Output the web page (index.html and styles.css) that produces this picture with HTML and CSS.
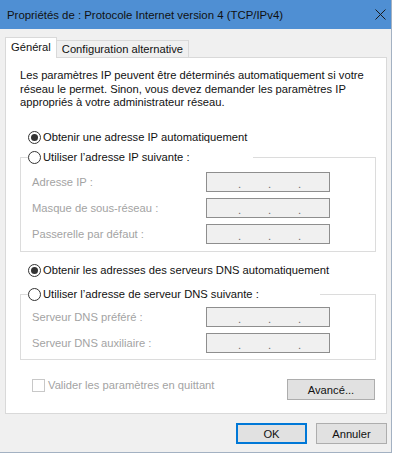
FILE: index.html
```html
<!DOCTYPE html>
<html lang="fr">
<head>
<meta charset="utf-8">
<title>Propriétés de : Protocole Internet version 4 (TCP/IPv4)</title>
<link rel="stylesheet" href="styles.css">
</head>
<body>
<div class="window">
  <div class="titlebar">
    <span class="title">Propriétés de : Protocole Internet version 4 (TCP/IPv4)</span>
    <svg class="close" width="11" height="11" viewBox="0 0 11 11"><path d="M0.5 0.5L10.5 10.5M10.5 0.5L0.5 10.5" stroke="#1a1a1a" stroke-width="1" fill="none"/></svg>
  </div>
  <div class="tabs">
    <div class="tab active">Général</div>
    <div class="tab">Configuration alternative</div>
  </div>
  <div class="panel">
    <p class="intro">Les paramètres IP peuvent être déterminés automatiquement si votre<br>réseau le permet. Sinon, vous devez demander les paramètres IP<br>appropriés à votre administrateur réseau.</p>

    <div class="radio-row first"><span class="radio checked"></span>Obtenir une adresse IP automatiquement</div>
    <fieldset class="group">
      <legend class="legend legend-ip"><span class="radio"></span>Utiliser l’adresse IP suivante :</legend>
      <div class="field first"><span class="flabel">Adresse IP :</span><span class="ipbox"><i>.</i><i>.</i><i>.</i></span></div>
      <div class="field"><span class="flabel">Masque de sous-réseau :</span><span class="ipbox"><i>.</i><i>.</i><i>.</i></span></div>
      <div class="field"><span class="flabel">Passerelle par défaut :</span><span class="ipbox"><i>.</i><i>.</i><i>.</i></span></div>
    </fieldset>

    <div class="radio-row dns"><span class="radio checked"></span>Obtenir les adresses des serveurs DNS automatiquement</div>
    <fieldset class="group group-dns">
      <legend class="legend legend-dns"><span class="radio"></span>Utiliser l’adresse de serveur DNS suivante :</legend>
      <div class="field first"><span class="flabel">Serveur DNS préféré :</span><span class="ipbox"><i>.</i><i>.</i><i>.</i></span></div>
      <div class="field"><span class="flabel">Serveur DNS auxiliaire :</span><span class="ipbox"><i>.</i><i>.</i><i>.</i></span></div>
    </fieldset>

    <div class="bottom-row">
      <span class="checkbox"></span>
      <span class="check-label">Valider les paramètres en quittant</span>
      <button class="btn advanced">Avancé...</button>
    </div>
  </div>
  <div class="footer">
    <button class="btn ok">OK</button>
    <button class="btn">Annuler</button>
  </div>
</div>
</body>
</html>
```

FILE: styles.css
```css
* { box-sizing: border-box; }
html, body { margin: 0; padding: 0; background: #ffffff; }
body {
  font-family: "Liberation Sans", Arial, sans-serif;
  font-size: 11.2px;
  color: #1b1b1b;
}

.window {
  width: 392px;
  height: 453px;
  background: #f0f0f0;
  border-right: 1px solid #a3b1c2;
  border-bottom: 1px solid #a3b1c2;
  display: flex;
  flex-direction: column;
}

.titlebar {
  height: 29px;
  flex: none;
  background: #4f8fd3;
  display: flex;
  align-items: center;
  padding-left: 7px;
  padding-right: 5px;
}
.title { flex: 1; color: #111; white-space: nowrap; font-size: 11.4px; }
.close { flex: none; }

.tabs {
  display: flex;
  align-items: flex-end;
  height: 20px;
  margin-top: 8px;
  padding-left: 5px;
  flex: none;
}
.tab {
  height: 17px;
  padding: 0 5px;
  border: 1px solid #d9d9d9;
  border-bottom: none;
  background: #f0f0f0;
  display: flex;
  align-items: center;
  white-space: nowrap;
  color: #111;
}
.tab.active {
  height: 21px;
  margin-bottom: -1px;
  background: #ffffff;
  position: relative;
  z-index: 1;
  padding-bottom: 2px;
}
.tab + .tab { margin-left: -1px; }

.panel {
  margin-left: 5px;
  width: 382px;
  height: 357px;
  flex: none;
  background: #ffffff;
  border: 1px solid #d9d9d9;
  padding: 11px 10px 0 14px;
}

.intro { margin: 0; line-height: 13.5px; color: #111; white-space: nowrap; }

.radio-row {
  display: flex;
  align-items: center;
  height: 14px;
  margin-left: 8px;
  white-space: nowrap;
  color: #111;
}
.radio-row.first { margin-top: 20.5px; }
.radio-row.dns { margin-top: 11px; }

.radio {
  flex: none;
  width: 13px;
  height: 13px;
  border: 1px solid #333333;
  border-radius: 50%;
  background: #ffffff;
  margin-right: 2px;
  display: inline-flex;
  align-items: center;
  justify-content: center;
}
.radio.checked::after {
  content: "";
  width: 7px;
  height: 7px;
  border-radius: 50%;
  background: #333333;
}

.group {
  border: 1px solid #dcdcdc;
  margin: 6px 0 0 0;
  padding: 0 0 7px 0;
  min-width: 0;
}
.group-dns { margin-top: 10px; padding-bottom: 6px; }

.legend {
  display: flex;
  align-items: center;
  height: 14px;
  padding: 0;
  margin-left: 7px;
  white-space: nowrap;
  color: #111;
}
.legend-ip { width: 225px; }
.legend-dns { width: 292px; }

.field {
  display: flex;
  align-items: center;
  height: 20px;
  margin-top: 6px;
  padding-left: 11px;
}
.field.first { margin-top: 8px; }
.group-dns .field.first { margin-top: 6px; }

.flabel { width: 174px; color: #a3a3a3; white-space: nowrap; }

.ipbox {
  width: 124px;
  height: 20px;
  border: 1px solid #8e8e8e;
  background: #f0f0f0;
  display: flex;
  align-items: center;
  padding-left: 31px;
  padding-top: 3px;
  color: #6e6e6e;
}
.ipbox i { font-style: normal; width: 30px; }

.bottom-row {
  display: flex;
  align-items: flex-start;
  height: 21px;
  margin-top: 19px;
  padding-left: 12px;
}
.checkbox {
  width: 13px;
  height: 13px;
  border: 1px solid #c8c8c8;
  background: #ffffff;
  flex: none;
}
.check-label { margin-left: 3px; color: #a3a3a3; white-space: nowrap; line-height: 13px; }

.btn {
  font-family: inherit;
  font-size: 11.2px;
  color: #111;
  background: #e1e1e1;
  border: 1px solid #adadad;
  height: 21px;
  padding: 0;
  margin: 0;
}
.advanced { width: 88px; margin-left: auto; margin-right: 1px; }

.footer {
  display: flex;
  justify-content: flex-end;
  gap: 9px;
  margin-top: 9px;
  padding-right: 4px;
}
.footer .btn { width: 71px; }
.btn.ok {
  border: 1px solid #0078d7;
  box-shadow: inset 0 0 0 1px #0078d7;
}
```
